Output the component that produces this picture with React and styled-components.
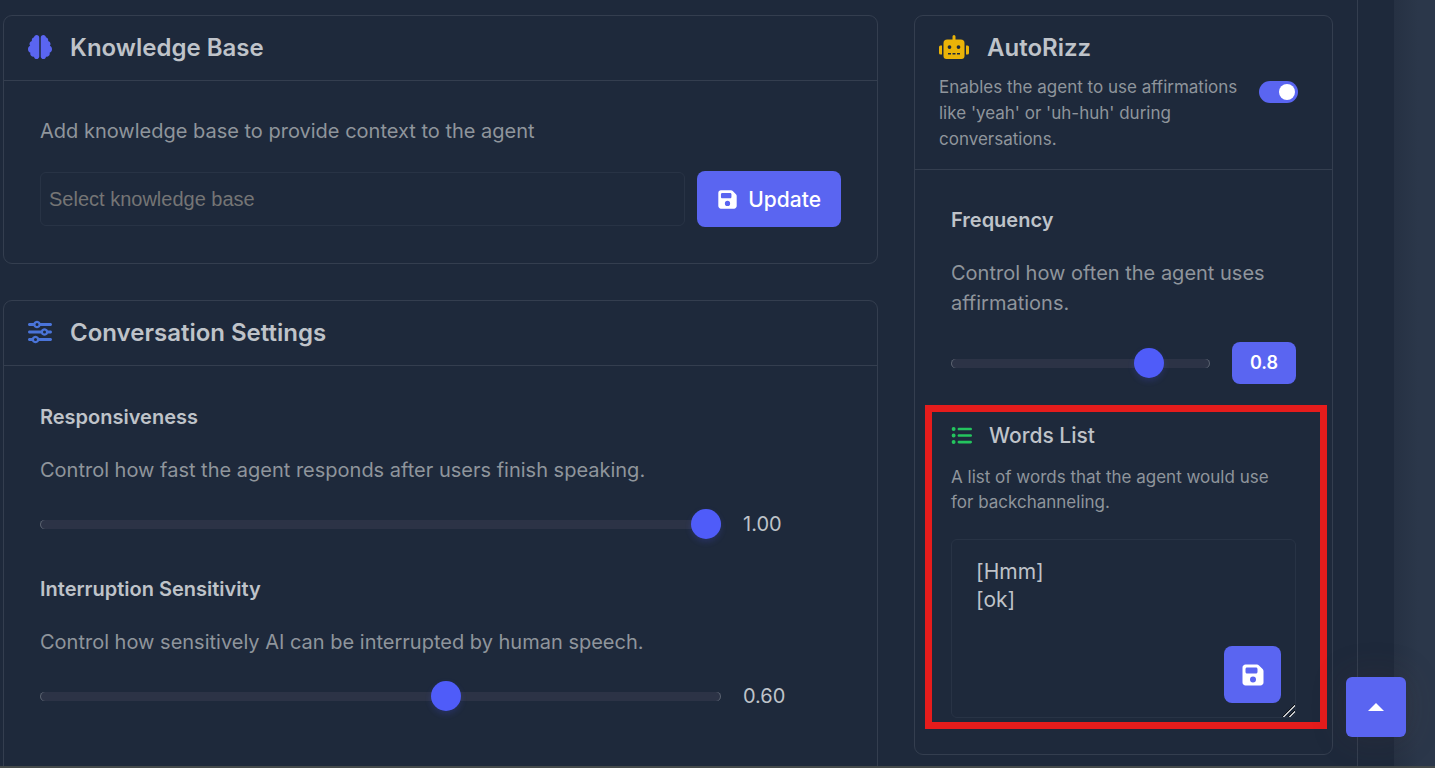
import React, { useState } from "react";
import styled, { createGlobalStyle, css } from "styled-components";
import { FaBrain, FaSliders, FaListUl, FaFloppyDisk } from "react-icons/fa6";
import { FaRobot } from "react-icons/fa";

const c = {
  bg: "#1e293b",
  line: "#343e4f",
  faint: "#283345",
  text: "#bfc3c9",
  muted: "#8f959c",
  accent: "#5a65f1",
  thumb: "#4f5cf9",
  track: "#2c3346",
};

const GlobalStyle = createGlobalStyle`
  *, *::before, *::after { box-sizing: border-box; }
  body {
    margin: 0;
    background: ${c.bg};
    color: ${c.text};
    font-family: Inter, "Liberation Sans", sans-serif;
    font-size: 20px;
    line-height: 30px;
  }
  h2, h3, h4, p { margin: 0; }
  button, input, textarea { font-family: inherit; }
`;

const Page = styled.div`
  position: relative;
  display: grid;
  grid-template-columns: minmax(0, 1fr) 36px 41px;
  height: 100vh;
  overflow: hidden;
  border-bottom: 2px solid #454a4a;
`;

const Shell = styled.main`
  display: grid;
  grid-template-columns: minmax(0, 1fr) 419px;
  align-items: start;
  gap: 36px;
  padding: 15px 24px 0 3px;
  border-right: 1px solid ${c.line};
`;

const Backdrop = styled.div`
  grid-column: 3;
  background: linear-gradient(90deg, #263143, #2b374a 60%);
`;

const Column = styled.div`
  display: flex;
  flex-direction: column;
  gap: 36px;
`;

const Card = styled.section`
  border: 1px solid ${c.line};
  border-radius: 9px;
`;

const CardHeader = styled.header`
  display: grid;
  grid-template-columns: minmax(0, 1fr) auto;
  align-items: center;
  gap: 20px;
  padding: 16px 34px ${(p) => (p.$described ? 17 : 16)}px 24px;
  border-bottom: 1px solid ${c.line};
`;

const CardTitle = styled.h2`
  display: flex;
  align-items: center;
  gap: 18px;
  font-size: 24px;
  font-weight: 600;
  line-height: 32px;
  svg { color: ${(p) => p.$icon}; flex: none; margin-bottom: 2px; }
`;

const HeaderText = styled.div`
  display: flex;
  flex-direction: column;
  gap: 10px;
`;

const CardBody = styled.div`
  display: flex;
  flex-direction: column;
  padding: ${(p) => p.$top}px 36px ${(p) => p.$bottom}px;
`;

const Note = styled.p`
  color: ${c.muted};
  ${(p) => p.$small && css`
    font-size: 17px;
    line-height: ${p.$tight ? "25px" : "26px"};
    padding-right: ${p.$tight ? "20px" : "0"};
  `}
`;

const Form = styled.form`
  display: flex;
  align-items: center;
  gap: 12px;
  margin-top: 25px;
`;

const TextInput = styled.input`
  flex: 1;
  min-width: 0;
  height: 54px;
  padding: 0 8px;
  border: 1px solid ${c.faint};
  border-radius: 6px;
  background: transparent;
  color: ${c.text};
  font-family: "Liberation Sans", Arial, sans-serif;
  font-size: 20px;
  &::placeholder { color: #757575; opacity: 1; }
`;

const Button = styled.button`
  display: flex;
  align-items: center;
  justify-content: center;
  gap: 10px;
  height: 56px;
  padding: 0 20px;
  border: 0;
  border-radius: 8px;
  background: ${c.accent};
  color: #fff;
  font-size: 21px;
  font-weight: 500;
`;

const Setting = styled.div`
  display: flex;
  flex-direction: column;
  & + & { margin-top: 35px; }
`;

const SettingLabel = styled.label`
  margin-bottom: 23px;
  color: ${c.text};
  font-weight: 600;
`;

const SliderRow = styled.div`
  display: flex;
  align-items: center;
  gap: 22px;
  margin-top: 24px;
  padding-right: ${(p) => p.$inset}px;
`;

const Slider = styled.input.attrs({ type: "range", min: 0, max: 1, step: 0.01 })`
  appearance: none;
  flex: 1;
  min-width: 0;
  height: 30px;
  margin: 0;
  background: transparent;
  &::-webkit-slider-runnable-track {
    height: 9px;
    border-radius: 5px;
    background: ${c.track};
    box-shadow: inset 1px 0 0 #5a6270, inset -1px 0 0 #5a6270;
  }
  &::-webkit-slider-thumb {
    appearance: none;
    width: 30px;
    height: 30px;
    margin-top: -11px;
    border-radius: 50%;
    background: ${c.thumb};
    box-shadow: 0 3px 6px rgba(79, 92, 249, 0.2);
  }
`;

const SliderValue = styled.output`
  width: 60px;
  color: ${c.text};
`;

const Badge = styled.output`
  width: 64px;
  padding: 6px 0;
  border-radius: 8px;
  background: ${c.accent};
  color: #fff;
  font-size: 18px;
  font-weight: 600;
  text-align: center;
`;

const Toggle = styled.input.attrs({ type: "checkbox", role: "switch" })`
  appearance: none;
  display: flex;
  align-items: center;
  width: 39px;
  height: 22px;
  margin: 0;
  padding: 0 3px;
  border-radius: 11px;
  background: #3a4354;
  &::before {
    content: "";
    width: 16px;
    height: 16px;
    border-radius: 50%;
    background: #fff;
  }
  &:checked { justify-content: flex-end; background: ${c.accent}; }
`;

const Words = styled.section`
  position: relative;
  display: flex;
  flex-direction: column;
  margin-top: 37px;
`;

const Highlight = styled.div`
  position: absolute;
  inset: -16px -31px -11px -26px;
  border: 7px solid #e61c1c;
  pointer-events: none;
`;

const WordsTitle = styled.h3`
  display: flex;
  align-items: center;
  gap: 17px;
  margin-bottom: 14px;
  font-size: 21px;
  font-weight: 500;
  svg { color: #24c45e; margin-bottom: 2px; }
`;

const Editor = styled.div`
  position: relative;
  display: flex;
  margin-top: 24px;
`;

const WordsInput = styled.textarea`
  flex: 1;
  min-width: 0;
  height: 179px;
  padding: 18px 24px;
  border: 1px solid ${c.faint};
  border-radius: 6px;
  background: transparent;
  color: ${c.text};
  font-size: 21px;
  line-height: 28px;
  resize: vertical;
  &::-webkit-resizer {
    background: linear-gradient(135deg, transparent 54%, #0c0f14 54% 59%, #c4c6c9 59% 66%, transparent 66% 74%, #0c0f14 74% 79%, #c4c6c9 79% 86%, transparent 86%);
  }
`;

const SaveButton = styled(Button)`
  position: absolute;
  right: 15px;
  bottom: 15px;
  width: 57px;
  height: 57px;
  padding: 0;
`;

const TopButton = styled.button`
  position: fixed;
  right: 29px;
  bottom: 31px;
  display: grid;
  place-items: center;
  width: 60px;
  height: 60px;
  padding: 0;
  border: 0;
  border-radius: 6px;
  background: ${c.accent};
  box-shadow: 0 0 36px rgba(86, 61, 61, 0.2);
`;

function RangeSetting({ id, label, note, initial }) {
  const [value, setValue] = useState(initial);
  return (
    <Setting>
      <SettingLabel htmlFor={id}>{label}</SettingLabel>
      <Note>{note}</Note>
      <SliderRow $inset={38}>
        <Slider id={id} value={value} onChange={(e) => setValue(Number(e.target.value))} />
        <SliderValue htmlFor={id}>{value.toFixed(2)}</SliderValue>
      </SliderRow>
    </Setting>
  );
}

export default function App() {
  const [frequency, setFrequency] = useState(0.8);
  return (
    <>
      <GlobalStyle />
      <Page>
        <Shell>
          <Column>
            <Card>
              <CardHeader>
                <CardTitle $icon={c.accent}><FaBrain size={24} />Knowledge Base</CardTitle>
              </CardHeader>
              <CardBody $top={35} $bottom={36}>
                <Note>Add knowledge base to provide context to the agent</Note>
                <Form onSubmit={(e) => e.preventDefault()}>
                  <TextInput aria-label="Knowledge base" placeholder="Select knowledge base" />
                  <Button type="submit"><FaFloppyDisk size={21} />Update</Button>
                </Form>
              </CardBody>
            </Card>
            <Card>
              <CardHeader>
                <CardTitle $icon="#4a74d9"><FaSliders size={24} />Conversation Settings</CardTitle>
              </CardHeader>
              <CardBody $top={36} $bottom={72}>
                <RangeSetting
                  id="responsiveness"
                  label="Responsiveness"
                  note="Control how fast the agent responds after users finish speaking."
                  initial={1}
                />
                <RangeSetting
                  id="sensitivity"
                  label="Interruption Sensitivity"
                  note="Control how sensitively AI can be interrupted by human speech."
                  initial={0.6}
                />
              </CardBody>
            </Card>
          </Column>

          <Card>
            <CardHeader $described>
              <HeaderText>
                <CardTitle $icon="#eab308"><FaRobot size={30} />AutoRizz</CardTitle>
                <Note $small>Enables the agent to use affirmations like 'yeah' or 'uh-huh' during conversations.</Note>
              </HeaderText>
              <Toggle aria-label="AutoRizz" defaultChecked />
            </CardHeader>
            <CardBody $top={35} $bottom={36}>
              <Setting>
                <SettingLabel htmlFor="frequency">Frequency</SettingLabel>
                <Note>Control how often the agent uses affirmations.</Note>
                <SliderRow $inset={0}>
                  <Slider id="frequency" value={frequency} onChange={(e) => setFrequency(Number(e.target.value))} />
                  <Badge htmlFor="frequency">{frequency}</Badge>
                </SliderRow>
              </Setting>
              <Words>
                <WordsTitle><FaListUl size={21} />Words List</WordsTitle>
                <Note $small $tight>A list of words that the agent would use for backchanneling.</Note>
                <Editor>
                  <WordsInput aria-label="Words list" defaultValue={"[Hmm]\n[ok]"} />
                  <SaveButton type="button" aria-label="Save words"><FaFloppyDisk size={24} /></SaveButton>
                </Editor>
                <Highlight />
              </Words>
            </CardBody>
          </Card>
        </Shell>
        <Backdrop />
      </Page>
      <TopButton type="button" aria-label="Back to top">
        <svg width="16" height="8" viewBox="0 0 16 8" fill="#fff"><path d="M8 0l8 8H0z" /></svg>
      </TopButton>
    </>
  );
}
